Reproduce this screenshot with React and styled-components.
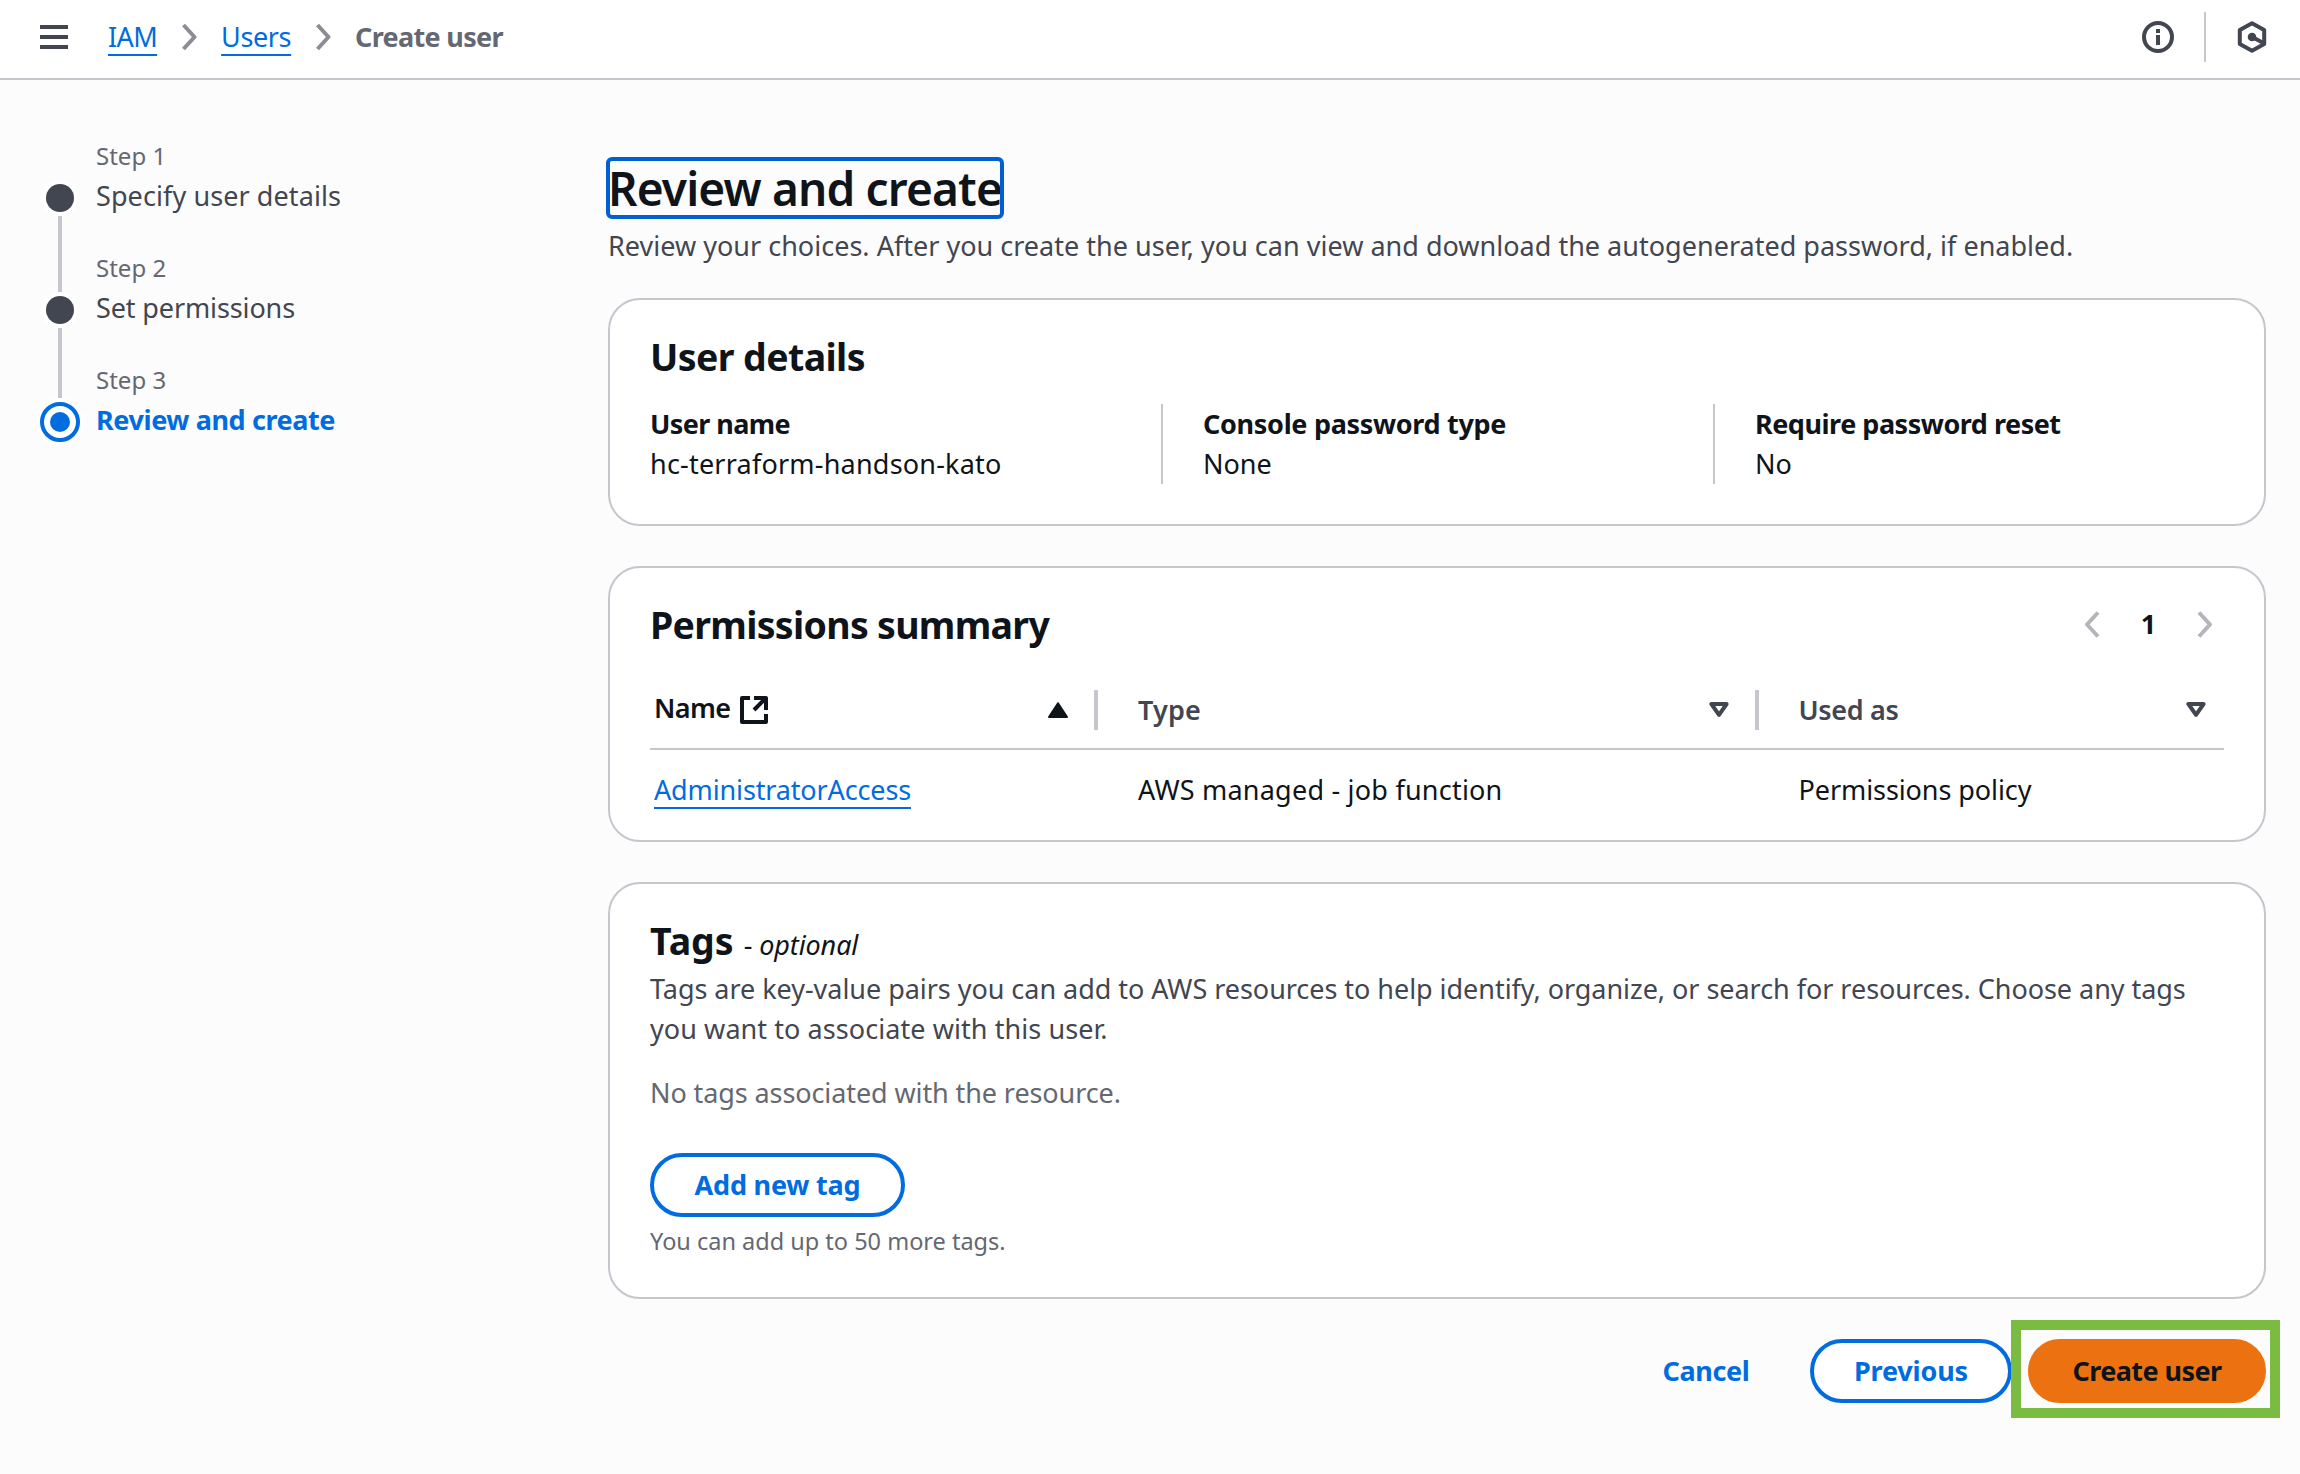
import React from "react";
import styled, { createGlobalStyle, css } from "styled-components";

const color = {
  heading: "#0f141a",
  body: "#424650",
  muted: "#656871",
  link: "#006ce0",
  focus: "#0060d2",
  border: "#c6c6cd",
  page: "#fcfcfd",
  surface: "#ffffff",
  primary: "#ec7211",
  highlight: "#7abc42",
};

const GlobalStyle = createGlobalStyle`
  *, *::before, *::after { box-sizing: border-box; }
  body {
    margin: 0;
    min-height: 100vh;
    background: ${color.page};
    color: ${color.heading};
    font-family: "Noto Sans", "Open Sans", sans-serif;
    font-size: 27px;
    line-height: 40px;
  }
  h1, h2, p, ol { margin: 0; padding: 0; }
  svg { display: block; flex: none; }
`;

const track = css`
  letter-spacing: ${(p) => p.$track || 0}px;
`;

/* ---------- top bar ---------- */

const TopBar = styled.header`
  display: flex;
  align-items: center;
  height: 80px;
  padding: 0 32px 4px 40px;
  background: ${color.surface};
  border-bottom: 2px solid ${color.border};
`;

const MenuButton = styled.button`
  display: flex;
  margin: 0 40px 0 0;
  padding: 0;
  border: 0;
  background: none;
  color: ${color.body};
`;

const Breadcrumbs = styled.nav`
  display: flex;
  align-items: center;
  gap: 24px;
  flex: 1;
  white-space: nowrap;
`;

const Link = styled.a`
  ${track}
  color: ${color.link};
  text-decoration: underline;
  text-decoration-thickness: 2px;
  text-underline-offset: 7px;
  text-decoration-skip-ink: none;
`;

const CurrentCrumb = styled.span`
  color: ${color.muted};
  font-weight: 700;
  letter-spacing: -0.69px;
`;

const Tools = styled.div`
  display: flex;
  align-items: center;
  gap: 30px;
  color: ${color.body};
`;

const ToolDivider = styled.span`
  width: 2px;
  height: 50px;
  background: ${color.border};
`;

/* ---------- wizard navigation ---------- */

const Layout = styled.div`
  display: grid;
  grid-template-columns: 568px 1658px;
  min-height: calc(100vh - 80px);
  padding: 0 34px 0 40px;
`;

const Steps = styled.ol`
  list-style: none;
  padding-top: 56px;
`;

const Step = styled.li`
  display: flex;
  gap: 16px;
  height: 112px;
`;

const Track = styled.div`
  display: flex;
  flex-direction: column;
  align-items: center;
  gap: 4px;
  width: 40px;
`;

const Connector = styled.span`
  width: 4px;
  ${(p) => (p.$height ? `height: ${p.$height}px;` : "flex: 1;")}
  background: ${(p) => (p.$hidden ? "transparent" : color.border)};
`;

const Dot = styled.span`
  width: 28px;
  height: 28px;
  border-radius: 50%;
  background: ${color.body};
  box-shadow: 0 0 0 4px ${color.surface};
`;

const ActiveDot = styled.span`
  display: grid;
  place-items: center;
  width: 40px;
  height: 40px;
  border: 4px solid ${color.link};
  border-radius: 50%;
  background: ${color.surface};
  box-shadow: 0 0 0 4px ${color.surface};

  &::before {
    content: "";
    width: 20px;
    height: 20px;
    border-radius: 50%;
    background: ${color.link};
  }
`;

const StepText = styled.div`
  display: flex;
  flex-direction: column;
  white-space: nowrap;
`;

const StepLabel = styled.span`
  color: ${color.muted};
  font-size: 24px;
`;

const StepTitle = styled.span`
  ${track}
  color: ${(p) => (p.$active ? color.link : color.body)};
  font-weight: ${(p) => (p.$active ? 700 : 400)};
`;

/* ---------- main column ---------- */

const Main = styled.main`
  padding-top: 79px;
`;

const PageTitle = styled.h1`
  width: 394px;
  font-size: 46px;
  font-weight: 600;
  line-height: 58px;
  letter-spacing: -0.85px;
  white-space: nowrap;
  border-radius: 4px;
  outline: 4px solid ${color.focus};
  outline-offset: -2px;
`;

const Lead = styled.p`
  margin: 9px 0 32px;
  color: ${color.body};
  white-space: nowrap;
  ${track}
`;

const Card = styled.section`
  margin-bottom: 40px;
  padding: 32px 40px ${(p) => p.$bottom ?? 40}px;
  background: ${color.surface};
  border: 2px solid ${color.border};
  border-radius: 32px;
`;

const CardHeader = styled.div`
  display: flex;
  align-items: center;
  justify-content: space-between;
  height: 48px;
`;

const CardTitle = styled.h2`
  ${track}
  height: 48px;
  font-size: 37.5px;
  font-weight: 700;
  line-height: 50px;
  white-space: nowrap;
`;

const Optional = styled.span`
  margin-left: 10px;
  font-size: 27px;
  font-weight: 400;
  line-height: 1;
  letter-spacing: -0.1px;
`;

const Details = styled.div`
  display: grid;
  grid-template-columns: 511px 552px 1fr;
  margin-top: 24px;
`;

const Detail = styled.div`
  display: flex;
  flex-direction: column;
  white-space: nowrap;

  & + & {
    padding-left: 40px;
    border-left: 2px solid ${color.border};
  }
`;

const DetailLabel = styled.span`
  ${track}
  font-weight: 700;
`;

const DetailValue = styled.span`
  ${track}
`;

/* ---------- table ---------- */

const Pagination = styled.div`
  display: flex;
  align-items: center;
  margin-right: 11px;
  color: #b4b4bb;
`;

const PageNumber = styled.span`
  width: 97px;
  color: ${color.heading};
  font-weight: 700;
  text-align: center;
`;

const TableRow = styled.div`
  display: grid;
  grid-template-columns: 448px 661px 1fr;
`;

const TableHead = styled(TableRow)`
  align-items: center;
  height: 78px;
  margin-top: 24px;
  border-bottom: 2px solid ${color.border};
`;

const HeadCell = styled.div`
  display: flex;
  align-items: center;
  justify-content: space-between;
  height: 40px;
  padding: 0 ${(p) => (p.$last ? 18 : 26)}px 0 ${(p) => p.$left}px;
  border-right: ${(p) => (p.$last ? "0" : `4px solid ${color.border}`)};
  color: ${(p) => (p.$sorted ? color.heading : color.body)};
  font-weight: 600;
`;

const HeadText = styled.span`
  ${track}
  padding-bottom: ${(p) => p.$raise || 0}px;
`;

const HeadLabel = styled.span`
  display: flex;
  align-items: center;
  gap: 9px;
`;

const Cell = styled.div`
  padding: 20px 0 30px ${(p) => p.$left}px;
  white-space: nowrap;
  ${track}
`;

/* ---------- tags ---------- */

const TagsText = styled.p`
  margin-top: 5px;
  color: ${color.body};
`;

const Line = styled.span`
  ${track}
  display: block;
  white-space: nowrap;
`;

const EmptyText = styled.p`
  margin: 24px 0 40px;
  color: ${color.muted};
  letter-spacing: -0.1px;
`;

const Hint = styled.p`
  margin-top: 8px;
  color: ${color.muted};
  font-size: 23.5px;
  line-height: 32px;
`;

/* ---------- buttons ---------- */

const variants = {
  normal: css`
    color: ${color.link};
    background: ${color.surface};
    border-color: ${color.link};
  `,
  link: css`
    color: ${color.link};
    background: transparent;
    border-color: transparent;
  `,
  primary: css`
    color: ${color.heading};
    background: ${color.primary};
    border-color: ${color.primary};
  `,
};

const Button = styled.button`
  display: flex;
  align-items: center;
  justify-content: center;
  width: ${(p) => p.$width}px;
  height: 64px;
  padding: 0;
  border: 4px solid;
  border-radius: 32px;
  font: inherit;
  font-weight: 700;
  white-space: nowrap;
  ${track}
  ${(p) => variants[p.$variant]}
`;

const Actions = styled.div`
  display: flex;
  justify-content: flex-end;
  gap: 16px;
`;

const Highlighted = styled.div`
  position: relative;

  &::after {
    content: "";
    position: absolute;
    inset: -19px -14px -15px -17px;
    border: 10px solid ${color.highlight};
    pointer-events: none;
  }
`;

/* ---------- icons ---------- */

const MenuIcon = () => (
  <svg width="28" height="24" viewBox="0 0 28 24" fill="currentColor">
    <path d="M0 0h28v4H0zM0 10h28v4H0zM0 20h28v4H0z" />
  </svg>
);

const CrumbArrow = () => (
  <svg width="16" height="28" viewBox="0 0 16 28" fill="none" stroke="#8c8c94" strokeWidth="4">
    <path d="M2.5 2l11 12-11 12" strokeLinejoin="round" />
  </svg>
);

const PageArrow = ({ left }) => (
  <svg width="16" height="27" viewBox="0 0 16 27" fill="none" stroke="currentColor" strokeWidth="4" strokeLinejoin="round">
    <path d={left ? "M14 1.5l-11 12 11 12" : "M2 1.5l11 12-11 12"} />
  </svg>
);

const InfoIcon = () => (
  <svg width="32" height="32" viewBox="0 0 32 32">
    <circle cx="16" cy="16" r="14" fill="none" stroke="currentColor" strokeWidth="4" />
    <path d="M14 8h4v4h-4zM14 14h4v10h-4z" fill="currentColor" />
  </svg>
);

const HexIcon = () => (
  <svg width="32" height="32" viewBox="0 0 32 32">
    <path
      d="M16 2.3L28.2 9v14L16 29.7 3.8 23V9z"
      fill="none"
      stroke="currentColor"
      strokeWidth="4"
      strokeLinejoin="round"
    />
    <circle cx="16" cy="16" r="4.3" fill="currentColor" />
    <path d="M16 16l11 5.7" stroke="currentColor" strokeWidth="4" />
  </svg>
);

const ExternalIcon = () => (
  <svg width="28" height="28" viewBox="0 0 28 28" fill="none" stroke="currentColor" strokeWidth="4">
    <path d="M10 2H2v24h24v-8" strokeLinejoin="round" />
    <path d="M14 2h12v12" strokeLinejoin="round" />
    <path d="M25 3L14 14" />
  </svg>
);

const SortUp = () => (
  <svg width="20" height="16" viewBox="0 0 20 16" fill="currentColor" stroke="currentColor" strokeWidth="2" strokeLinejoin="round">
    <path d="M10 1.2L19 15H1z" />
  </svg>
);

const SortDown = () => (
  <svg width="20" height="16" viewBox="0 0 20 16" fill="none" stroke="currentColor" strokeWidth="4" strokeLinejoin="round">
    <path d="M2.4 2h15.2L10 12.8z" />
  </svg>
);

const details = [
  { label: "User name", value: "hc-terraform-handson-kato", lt: -0.58, vt: 0.21 },
  { label: "Console password type", value: "None", lt: -0.31, vt: 0 },
  { label: "Require password reset", value: "No", lt: -0.48, vt: 0 },
];

export default function App() {
  return (
    <>
      <GlobalStyle />
      <TopBar>
        <MenuButton aria-label="Menu">
          <MenuIcon />
        </MenuButton>
        <Breadcrumbs>
          <Link $track={-0.6}>IAM</Link>
          <CrumbArrow />
          <Link $track={-0.4}>Users</Link>
          <CrumbArrow />
          <CurrentCrumb>Create user</CurrentCrumb>
        </Breadcrumbs>
        <Tools>
          <InfoIcon />
          <ToolDivider />
          <HexIcon />
        </Tools>
      </TopBar>

      <Layout>
        <Steps>
          <Step>
            <Track>
              <Connector $height={44} $hidden />
              <Dot />
              <Connector />
            </Track>
            <StepText>
              <StepLabel>Step 1</StepLabel>
              <StepTitle $track={0.09}>Specify user details</StepTitle>
            </StepText>
          </Step>
          <Step>
            <Track>
              <Connector $height={44} />
              <Dot />
              <Connector />
            </Track>
            <StepText>
              <StepLabel>Step 2</StepLabel>
              <StepTitle $track={-0.12}>Set permissions</StepTitle>
            </StepText>
          </Step>
          <Step>
            <Track>
              <Connector $height={38} />
              <ActiveDot />
            </Track>
            <StepText>
              <StepLabel>Step 3</StepLabel>
              <StepTitle $active $track={-0.4}>Review and create</StepTitle>
            </StepText>
          </Step>
        </Steps>

        <Main>
          <PageTitle>Review and create</PageTitle>
          <Lead $track={0.012}>
            Review your choices. After you create the user, you can view and download the autogenerated password, if enabled.
          </Lead>

          <Card>
            <CardTitle $track={-0.6}>User details</CardTitle>
            <Details>
              {details.map((d) => (
                <Detail key={d.label}>
                  <DetailLabel $track={d.lt}>{d.label}</DetailLabel>
                  <DetailValue $track={d.vt}>{d.value}</DetailValue>
                </Detail>
              ))}
            </Details>
          </Card>

          <Card $bottom={0}>
            <CardHeader>
              <CardTitle $track={-0.7}>Permissions summary</CardTitle>
              <Pagination>
                <PageArrow left />
                <PageNumber>1</PageNumber>
                <PageArrow />
              </Pagination>
            </CardHeader>
            <TableHead>
              <HeadCell $left={4} $sorted>
                <HeadLabel>
                  <HeadText $track={-0.6} $raise={4}>Name</HeadText>
                  <ExternalIcon />
                </HeadLabel>
                <SortUp />
              </HeadCell>
              <HeadCell $left={40}>
                <HeadText $track={0.2}>Type</HeadText>
                <SortDown />
              </HeadCell>
              <HeadCell $left={39.5} $last>
                <HeadText $track={-0.33}>Used as</HeadText>
                <SortDown />
              </HeadCell>
            </TableHead>
            <TableRow>
              <Cell $left={4}>
                <Link $track={-0.14}>AdministratorAccess</Link>
              </Cell>
              <Cell $left={40} $track={0.22}>AWS managed - job function</Cell>
              <Cell $left={39.5} $track={-0.08}>Permissions policy</Cell>
            </TableRow>
          </Card>

          <Card>
            <CardTitle $track={0}>
              Tags
              <Optional>
                - <i>optional</i>
              </Optional>
            </CardTitle>
            <TagsText>
              <Line $track={-0.04}>
                Tags are key-value pairs you can add to AWS resources to help identify, organize, or search for resources. Choose any tags
              </Line>
              <Line $track={0.07}>you want to associate with this user.</Line>
            </TagsText>
            <EmptyText>No tags associated with the resource.</EmptyText>
            <Button $variant="normal" $width={255} $track={-0.2}>Add new tag</Button>
            <Hint>You can add up to 50 more tags.</Hint>
          </Card>

          <Actions>
            <Button $variant="link" $width={176} $track={-0.35}>Cancel</Button>
            <Button $variant="normal" $width={202} $track={-0.16}>Previous</Button>
            <Highlighted>
              <Button $variant="primary" $width={238} $track={-0.58}>Create user</Button>
            </Highlighted>
          </Actions>
        </Main>
      </Layout>
    </>
  );
}
